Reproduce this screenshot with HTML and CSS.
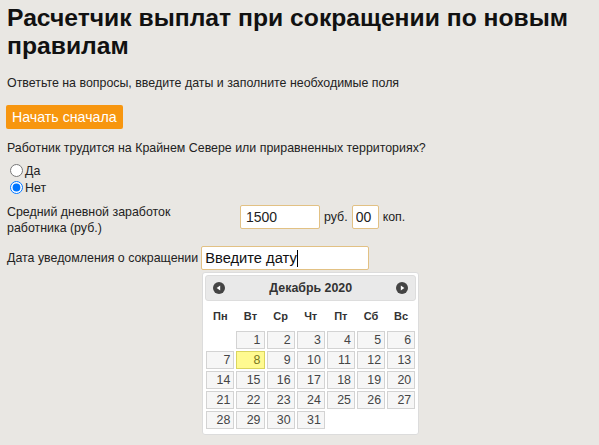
FILE: index.html
```html
<!DOCTYPE html>
<html lang="ru">
<head>
<meta charset="utf-8">
<title>Расчетчик выплат</title>
<link rel="stylesheet" href="styles.css">
</head>
<body>
<div class="page">
  <h1 class="title">Расчетчик выплат при сокращении по новым правилам</h1>
  <p class="intro">Ответьте на вопросы, введите даты и заполните необходимые поля</p>
  <button class="btn-reset" type="button">Начать сначала</button>
  <p class="question">Работник трудится на Крайнем Севере или приравненных территориях?</p>
  <div class="radios">
    <label class="radio"><input type="radio" name="north"> Да</label>
    <label class="radio"><input type="radio" name="north" checked> Нет</label>
  </div>
  <div class="salary-row">
    <div class="salary-label">Средний дневной заработок работника (руб.)</div>
    <input class="field field-rub" type="text" value="1500">
    <span class="unit">руб.</span>
    <input class="field field-kop" type="text" value="00">
    <span class="unit">коп.</span>
  </div>
  <div class="date-row">
    <span class="date-label">Дата уведомления о сокращении</span>
    <div class="date-wrap">
      <div class="field field-date">Введите дату<span class="caret"></span></div>
      <div class="datepicker">
        <div class="dp-header">
          <span class="dp-nav"><svg width="12" height="12" viewBox="0 0 12 12"><circle cx="6" cy="6" r="6" fill="#444"/><path d="M3.6 6 L7.2 3.4 L7.2 8.6 Z" fill="#fff"/></svg></span>
          <span class="dp-title">Декабрь 2020</span>
          <span class="dp-nav"><svg width="12" height="12" viewBox="0 0 12 12"><circle cx="6" cy="6" r="6" fill="#444"/><path d="M8.4 6 L4.8 3.4 L4.8 8.6 Z" fill="#fff"/></svg></span>
        </div>
        <table class="dp-table">
          <thead>
            <tr><th>Пн</th><th>Вт</th><th>Ср</th><th>Чт</th><th>Пт</th><th>Сб</th><th>Вс</th></tr>
          </thead>
          <tbody>
            <tr><td></td><td><span class="day">1</span></td><td><span class="day">2</span></td><td><span class="day">3</span></td><td><span class="day">4</span></td><td><span class="day">5</span></td><td><span class="day">6</span></td></tr>
            <tr><td><span class="day">7</span></td><td><span class="day today">8</span></td><td><span class="day">9</span></td><td><span class="day">10</span></td><td><span class="day">11</span></td><td><span class="day">12</span></td><td><span class="day">13</span></td></tr>
            <tr><td><span class="day">14</span></td><td><span class="day">15</span></td><td><span class="day">16</span></td><td><span class="day">17</span></td><td><span class="day">18</span></td><td><span class="day">19</span></td><td><span class="day">20</span></td></tr>
            <tr><td><span class="day">21</span></td><td><span class="day">22</span></td><td><span class="day">23</span></td><td><span class="day">24</span></td><td><span class="day">25</span></td><td><span class="day">26</span></td><td><span class="day">27</span></td></tr>
            <tr><td><span class="day">28</span></td><td><span class="day">29</span></td><td><span class="day">30</span></td><td><span class="day">31</span></td><td></td><td></td><td></td></tr>
          </tbody>
        </table>
      </div>
    </div>
  </div>
</div>
</body>
</html>
```
FILE: styles.css
```css
html, body {
  margin: 0;
  padding: 0;
  background: #e9e7e3;
}
body {
  font-family: "Liberation Sans", Arial, sans-serif;
  font-size: 12.4px;
  color: #222;
}
.page {
  padding: 4px 7px 0;
}
.title {
  margin: 0;
  font-size: 24.7px;
  line-height: 28px;
  font-weight: bold;
  color: #111;
}
.intro {
  margin: 16px 0 0;
  line-height: 15px;
}
.btn-reset {
  display: block;
  margin: 14px 0 0 -1px;
  height: 24px;
  padding: 0 6px;
  border: 0;
  border-radius: 2px;
  background: #f7960f;
  color: #fff;
  font-family: inherit;
  font-size: 14.2px;
}
.question {
  margin: 12px 0 0;
  line-height: 15px;
}
.radios {
  display: flex;
  flex-direction: column;
  margin-top: 6px;
}
.radio {
  display: flex;
  align-items: center;
  height: 17px;
}
.radio input {
  margin: 0 2px 0 3px;
  width: 13px;
  height: 13px;
}
.salary-row {
  display: flex;
  align-items: flex-start;
  margin-top: 4px;
}
.salary-label {
  width: 175px;
  margin: 4px 58px 0 0;
  line-height: 16px;
}
.field {
  box-sizing: border-box;
  height: 24px;
  border: 1px solid #e2c184;
  border-radius: 2px;
  background: #fff;
  font-family: inherit;
  font-size: 14px;
  color: #222;
  padding: 0 5px;
  outline: none;
}
.salary-row .field,
.salary-row .unit {
  margin-top: 5px;
}
.field-rub {
  width: 80px;
}
.field-kop {
  width: 27px;
  padding: 0 3px;
}
.unit {
  line-height: 24px;
  margin: 0 4px;
}
.date-row {
  display: flex;
  align-items: flex-start;
  margin-top: 10px;
}
.date-label {
  line-height: 24px;
  margin-right: 3px;
}
.date-wrap {
  display: flex;
  flex-direction: column;
}
.field-date {
  width: 168px;
  font-size: 14.7px;
  line-height: 22px;
  color: #111;
  padding: 0 3px;
  display: flex;
  align-items: center;
}
.caret {
  display: inline-block;
  width: 1px;
  height: 17px;
  background: #000;
}
.datepicker {
  margin: 2px 0 0 1px;
  width: 217px;
  box-sizing: border-box;
  background: #fff;
  border: 1px solid #dcdcdc;
  border-radius: 3px;
  padding: 2px 2px 4px;
}
.dp-header {
  display: flex;
  align-items: center;
  justify-content: space-between;
  height: 26px;
  box-sizing: border-box;
  background: #e9e9e9;
  border: 1px solid #dddddd;
  border-radius: 3px;
  padding: 0 7px 0 7px;
}
.dp-nav {
  display: flex;
}
.dp-title {
  font-weight: bold;
  font-size: 12.4px;
  color: #333;
}
.dp-table {
  width: 100%;
  border-collapse: collapse;
  margin-top: 3px;
}
.dp-table th {
  font-weight: bold;
  font-size: 11px;
  color: #333;
  height: 23px;
  padding: 0 0 3px;
}
.dp-table td {
  padding: 1px;
  height: 18px;
}
.day {
  display: block;
  box-sizing: border-box;
  height: 18px;
  line-height: 16px;
  text-align: right;
  padding: 0 3px;
  border: 1px solid #d3d3d3;
  background: #f6f6f6;
  color: #454545;
  font-size: 12.4px;
}
.day.today {
  background: #fffa90;
  border-color: #dad55e;
  color: #777620;
}
```
